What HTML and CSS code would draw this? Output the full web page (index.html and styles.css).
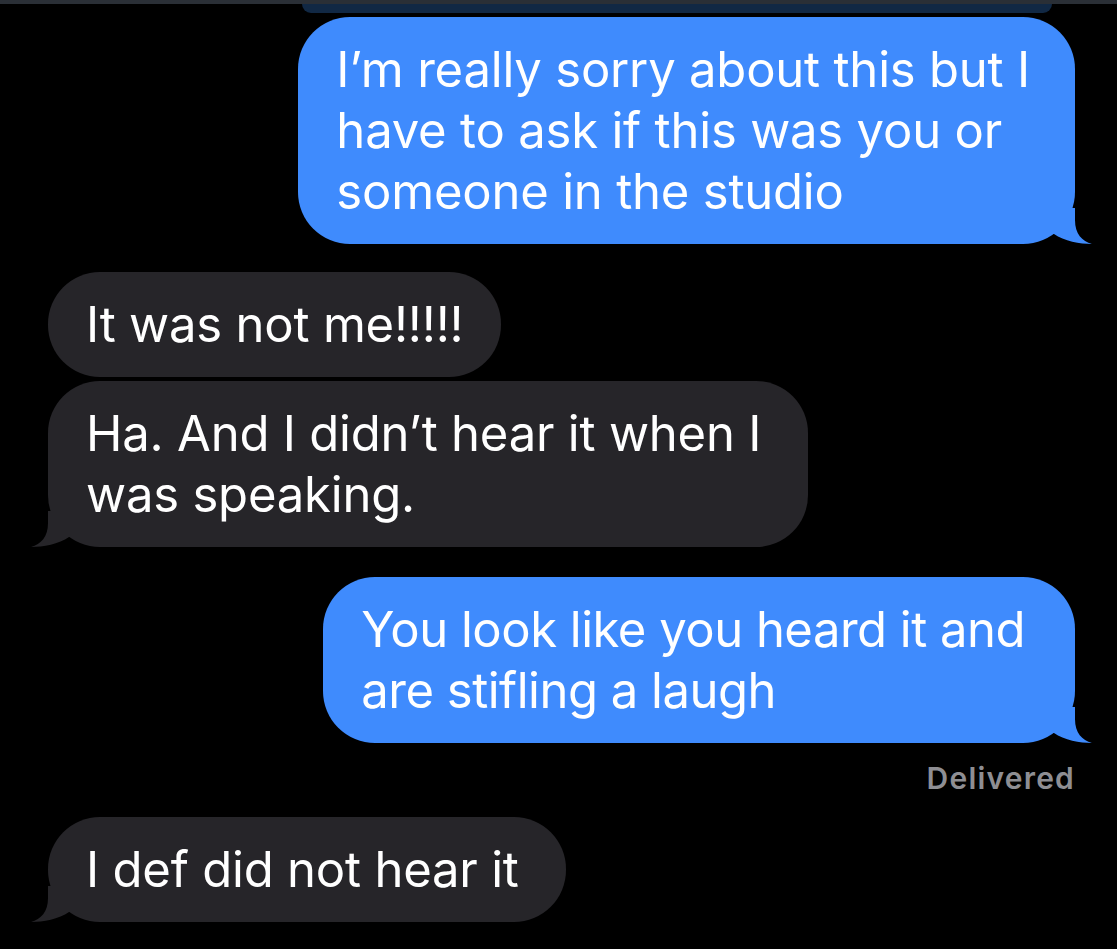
FILE: index.html
```html
<!DOCTYPE html>
<html>
<head>
  <title>Messages</title>
  <link rel="stylesheet" href="styles.css">
</head>
<body>
  <div class="topbar"></div>
  <div class="thread">
    <div class="prev-bubble"></div>

    <div class="bubble sent first">I’m really sorry about this but I<br>have to ask if this was you or<br>someone in the studio</div>

    <div class="bubble received no-tail group-start">It was not me!!!!!</div>
    <div class="bubble received">Ha. And I didn’t hear it when I<br>was speaking.</div>

    <div class="bubble sent narrow group-start">You look like you heard it and<br>are stifling a laugh</div>
    <div class="status">Delivered</div>

    <div class="bubble received last">I def did not hear it</div>
  </div>
</body>
</html>
```

FILE: styles.css
```css
body {
  margin: 0;
  background-color: #000;
  font-family: Inter, "Noto Sans", sans-serif;
  color: #fff;
  height: 949px;
  overflow: hidden;
}

.topbar {
  height: 4px;
  background-color: #2a2f36;
}

.thread {
  display: flex;
  flex-direction: column;
  padding: 0 42px 0 48px;
}

.prev-bubble {
  align-self: flex-end;
  width: 750px;
  height: 9px;
  margin-right: 23px;
  background-color: #112844;
  border-radius: 0 0 40px 40px;
}

.bubble {
  position: relative;
  padding: 22px 38px;
  font-size: 49px;
  line-height: 61px;
  letter-spacing: -0.2px;
  border-radius: 52px;
}

.sent {
  align-self: flex-end;
  background-color: #3f8bfd;
}

.received {
  align-self: flex-start;
  background-color: #262529;
  margin-top: 4px;
  padding-right: 47px;
}

.first {
  margin-top: 4px;
  padding-right: 45px;
}

.group-start {
  margin-top: 28px;
}

.received.no-tail {
  padding-right: 38px;
}

.sent.group-start {
  margin-top: 30px;
  padding-right: 50px;
}

.narrow {
  letter-spacing: -0.5px;
}

.bubble::after {
  content: "";
  position: absolute;
  bottom: 0;
  width: 40px;
  height: 36px;
  clip-path: path("M0,0 L23,0 L23,12 C23,26 30,33 40,36 C28,36 12,33 2,26 L0,26 Z");
}

.sent::after {
  right: -17px;
  background-color: #3f8bfd;
}

.received::after {
  left: -17px;
  background-color: #262529;
  transform: scaleX(-1);
}

.no-tail::after {
  display: none;
}

.status {
  align-self: flex-end;
  margin-top: 18px;
  font-size: 30px;
  font-weight: 600;
  line-height: 34px;
  letter-spacing: 1.2px;
  color: #8e8e93;
}

.last {
  margin-top: 22px;
}
```
